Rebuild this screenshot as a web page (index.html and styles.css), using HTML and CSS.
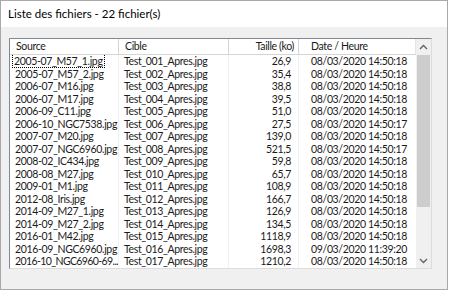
FILE: index.html
```html
<!DOCTYPE html>
<html>
<head>
  <title>Liste des fichiers</title>
  <link rel="stylesheet" href="styles.css">
</head>
<body>
  <div class="window">
    <div class="title-bar">Liste des fichiers - 22 fichier(s)</div>
    <div class="panel">
      <div class="list">
        <div class="grid">
          <div class="head">
            <div class="hcell">Source</div>
            <div class="hcell">Cible</div>
            <div class="hcell num">Taille (ko)</div>
            <div class="hcell date">Date / Heure</div>
          </div>
          <div class="rows">
            <div class="row"><div class="cell"><span class="focus">2005-07_M57_1.jpg</span></div><div class="cell">Test_001_Apres.jpg</div><div class="cell num">26,9</div><div class="cell date">08/03/2020 14:50:18</div></div>
            <div class="row"><div class="cell">2005-07_M57_2.jpg</div><div class="cell">Test_002_Apres.jpg</div><div class="cell num">35,4</div><div class="cell date">08/03/2020 14:50:18</div></div>
            <div class="row"><div class="cell">2006-07_M16.jpg</div><div class="cell">Test_003_Apres.jpg</div><div class="cell num">38,8</div><div class="cell date">08/03/2020 14:50:18</div></div>
            <div class="row"><div class="cell">2006-07_M17.jpg</div><div class="cell">Test_004_Apres.jpg</div><div class="cell num">39,5</div><div class="cell date">08/03/2020 14:50:18</div></div>
            <div class="row"><div class="cell">2006-09_C11.jpg</div><div class="cell">Test_005_Apres.jpg</div><div class="cell num">51,0</div><div class="cell date">08/03/2020 14:50:18</div></div>
            <div class="row"><div class="cell">2006-10_NGC7538.jpg</div><div class="cell">Test_006_Apres.jpg</div><div class="cell num">27,5</div><div class="cell date">08/03/2020 14:50:17</div></div>
            <div class="row"><div class="cell">2007-07_M20.jpg</div><div class="cell">Test_007_Apres.jpg</div><div class="cell num">139,0</div><div class="cell date">08/03/2020 14:50:18</div></div>
            <div class="row"><div class="cell">2007-07_NGC6960.jpg</div><div class="cell">Test_008_Apres.jpg</div><div class="cell num">521,5</div><div class="cell date">08/03/2020 14:50:17</div></div>
            <div class="row"><div class="cell">2008-02_IC434.jpg</div><div class="cell">Test_009_Apres.jpg</div><div class="cell num">59,8</div><div class="cell date">08/03/2020 14:50:18</div></div>
            <div class="row"><div class="cell">2008-08_M27.jpg</div><div class="cell">Test_010_Apres.jpg</div><div class="cell num">65,7</div><div class="cell date">08/03/2020 14:50:18</div></div>
            <div class="row"><div class="cell">2009-01_M1.jpg</div><div class="cell">Test_011_Apres.jpg</div><div class="cell num">108,9</div><div class="cell date">08/03/2020 14:50:18</div></div>
            <div class="row"><div class="cell">2012-08_Iris.jpg</div><div class="cell">Test_012_Apres.jpg</div><div class="cell num">166,7</div><div class="cell date">08/03/2020 14:50:18</div></div>
            <div class="row"><div class="cell">2014-09_M27_1.jpg</div><div class="cell">Test_013_Apres.jpg</div><div class="cell num">126,9</div><div class="cell date">08/03/2020 14:50:18</div></div>
            <div class="row"><div class="cell">2014-09_M27_2.jpg</div><div class="cell">Test_014_Apres.jpg</div><div class="cell num">134,5</div><div class="cell date">08/03/2020 14:50:18</div></div>
            <div class="row"><div class="cell">2016-01_M42.jpg</div><div class="cell">Test_015_Apres.jpg</div><div class="cell num">1118,9</div><div class="cell date">08/03/2020 14:50:18</div></div>
            <div class="row"><div class="cell">2016-09_NGC6960.jpg</div><div class="cell">Test_016_Apres.jpg</div><div class="cell num">1698,3</div><div class="cell date">09/03/2020 11:39:20</div></div>
            <div class="row"><div class="cell tight">2016-10_NGC6960-69...</div><div class="cell">Test_017_Apres.jpg</div><div class="cell num">1210,2</div><div class="cell date">08/03/2020 14:50:18</div></div>
          </div>
        </div>
        <div class="scrollbar">
          <div class="arrow">
            <svg width="9" height="6" viewBox="0 0 9 6"><path d="M1 5 L4.5 1.5 L8 5" fill="none" stroke="#606060" stroke-width="1.3"/></svg>
          </div>
          <div class="track"><div class="thumb"></div></div>
          <div class="arrow">
            <svg width="9" height="6" viewBox="0 0 9 6"><path d="M1 1 L4.5 4.5 L8 1" fill="none" stroke="#606060" stroke-width="1.3"/></svg>
          </div>
        </div>
      </div>
    </div>
  </div>
</body>
</html>
```

FILE: styles.css
```css
body {
  margin: 0;
  background-color: #ffffff;
  font-family: Lato, "Liberation Sans", sans-serif;
  font-size: 10.5px;
  letter-spacing: -0.35px;
  color: #1a1a1a;
}

.window {
  width: 448px;
  height: 290px;
  box-sizing: border-box;
  border: 1px solid #a9a9a9;
  background-color: #f0f0f0;
  display: flex;
  flex-direction: column;
}

.title-bar {
  height: 26px;
  line-height: 26px;
  padding-left: 7px;
  background-color: #ffffff;
  font-size: 11.5px;
  letter-spacing: 0;
  color: #000;
}

.panel {
  padding: 11px 0 0 8px;
}

.list {
  width: 423px;
  height: 231px;
  box-sizing: border-box;
  border: 1px solid #828790;
  border-right-color: #dcdcdc;
  border-bottom-color: #dcdcdc;
  background-color: #ffffff;
  display: flex;
  overflow: hidden;
}

.grid {
  flex: 1;
  display: flex;
  flex-direction: column;
  overflow: hidden;
}

.head,
.row {
  display: grid;
  grid-template-columns: 109px 110px 70px 117px;
}

.head {
  height: 15px;
  border-bottom: 1px solid #d5d5d5;
}

.hcell {
  line-height: 15px;
  padding-left: 6px;
  border-right: 1px solid #d5d5d5;
  white-space: nowrap;
  overflow: hidden;
}

.hcell.num {
  text-align: right;
  padding-right: 4px;
}

.hcell.date {
  padding-left: 12px;
  border-right-color: #e5e5e5;
}

.rows {
  flex: 1;
  overflow: hidden;
}

.row {
  height: 12.5px;
}

.cell {
  line-height: 12.5px;
  padding-left: 5px;
  border-right: 1px solid #f0f0f0;
  white-space: nowrap;
  overflow: hidden;
}

.cell.tight {
  letter-spacing: -0.6px;
}

.cell.num {
  text-align: right;
  padding-right: 7px;
}

.cell.date {
  padding-left: 12px;
  border-right: none;
}

.focus {
  outline: 1px dotted #000;
  outline-offset: 0;
  padding: 0 1px;
  margin-left: -2px;
}

.scrollbar {
  width: 15px;
  background-color: #f0f0f0;
  display: flex;
  flex-direction: column;
}

.arrow {
  height: 15px;
  display: flex;
  align-items: center;
  justify-content: center;
}

.track {
  flex: 1;
  padding: 1px;
}

.thumb {
  height: 152px;
  background-color: #cdcdcd;
}
```
